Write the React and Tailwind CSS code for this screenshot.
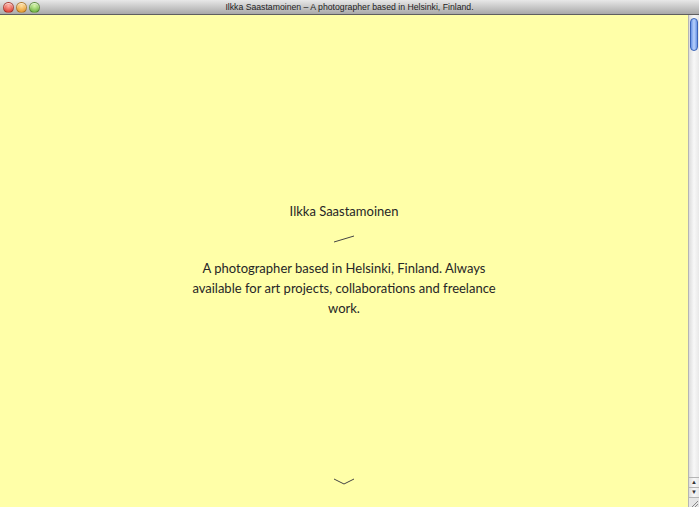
import React from "react";

// window chrome: traffic-light buttons
function Light({ from, to }) {
  return (
    <span
      className="w-[11px] h-[11px] rounded-full border border-[#00000040] shadow-[inset_0_1px_1px_rgba(255,255,255,0.7)]"
      style={{ background: `radial-gradient(circle at 50% 30%, ${from}, ${to})` }}
    />
  );
}

function TitleBar() {
  return (
    <div className="relative h-[15px] shrink-0 flex items-center bg-gradient-to-b from-[#e8e8e8] to-[#a9a9a9] border-b border-[#5f5f5f]">
      <div className="flex gap-[2px] pl-[3px]">
        <Light from="#ffb3a8" to="#d8261a" />
        <Light from="#ffe0a0" to="#e38c12" />
        <Light from="#d6f5a8" to="#59a72c" />
      </div>
      <div className="absolute inset-0 flex items-center justify-center text-[8.7px] leading-none text-[#222] font-['Liberation_Sans',sans-serif]">
        Ilkka Saastamoinen – A photographer based in Helsinki, Finland.
      </div>
    </div>
  );
}

function Scrollbar() {
  return (
    <div className="w-[11px] shrink-0 flex flex-col bg-gradient-to-r from-[#dcdcdc] via-[#f8f8f8] to-[#e8e8e8] border-l border-[#b5b5b5]">
      <div className="flex-1 pt-[3px] px-[1px]">
        <div className="h-[33px] rounded-full border border-[#3a64b8] bg-gradient-to-r from-[#6b94e6] via-[#b9d2fb] to-[#6b94e6]" />
      </div>
      <div className="h-[10px] flex items-center justify-center border-t border-[#b5b5b5] text-[6px] text-[#333]">▲</div>
      <div className="h-[10px] flex items-center justify-center border-t border-[#b5b5b5] text-[6px] text-[#333]">▼</div>
      <div className="h-[10px] border-t border-[#b5b5b5] bg-[#e6e6e6]">
        <svg width="10" height="10" viewBox="0 0 10 10">
          <path d="M9 3 L3 9 M9 6 L6 9" stroke="#888" strokeWidth="1" />
        </svg>
      </div>
    </div>
  );
}

export default function App() {
  return (
    <div className="w-[699px] h-[507px] flex flex-col overflow-hidden bg-[#ffffa8]">
      <TitleBar />
      <div className="flex flex-1 min-h-0">
        <main className="relative flex-1 flex flex-col items-center justify-center pb-[2px] text-[#262626] font-['Lato',sans-serif]">
          <h1 className="text-[13px] leading-5 mt-[-2px]">Ilkka Saastamoinen</h1>
          <svg className="mt-[14px]" width="22" height="8" viewBox="0 0 22 8">
            <line x1="1" y1="7" x2="21" y2="1" stroke="#444" strokeWidth="1" />
          </svg>
          <p className="mt-[15px] w-[312px] text-center text-[13px] leading-5">
            A photographer based in Helsinki, Finland. Always available for art projects, collaborations and freelance work.
          </p>
          <svg className="absolute bottom-[22px] left-1/2 -translate-x-1/2" width="22" height="7" viewBox="0 0 22 7">
            <path d="M1 1 L11 6 L21 1" fill="none" stroke="#444" strokeWidth="1" />
          </svg>
        </main>
        <Scrollbar />
      </div>
    </div>
  );
}
